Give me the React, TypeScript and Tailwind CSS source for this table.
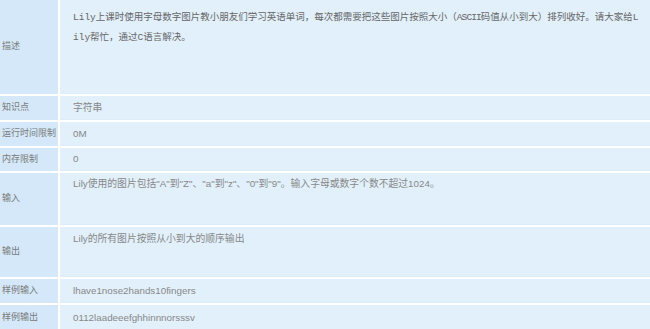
import React from 'react';

type Row = {
  label: string;
  height: string;
  value: React.ReactNode;
  top?: boolean;
};

const rows: Row[] = [
  {
    label: '描述',
    height: 'h-[94px]',
    top: true,
    value: (
      <div className="pt-[8px] leading-[20px] text-[9.5px] text-[#666] font-['Liberation_Mono','Noto_Sans_CJK_SC',monospace] whitespace-nowrap">
        <div>
          Lily上课时使用字母数字图片教小朋友们学习英语单词，每次都需要把这些图片按照大小（<span className="tracking-[-0.9px]">ASCII</span>码值从小到大）排列收好。请大家给L
        </div>
        <div>ily帮忙，通过C语言解决。</div>
      </div>
    ),
  },
  { label: '知识点', height: 'h-[24px]', value: '字符串' },
  { label: '运行时间限制', height: 'h-[24px]', value: '0M' },
  { label: '内存限制', height: 'h-[23px]', value: '0' },
  {
    label: '输入',
    height: 'h-[52px]',
    top: true,
    value: (
      <div className="pt-[3px]">
        Lily使用的图片包括"A"到"Z"、"a"到"z"、"0"到"9"。输入字母或数字个数不超过1024。
      </div>
    ),
  },
  {
    label: '输出',
    height: 'h-[50px]',
    top: true,
    value: <div className="pt-[4px]">Lily的所有图片按照从小到大的顺序输出</div>,
  },
  { label: '样例输入', height: 'h-[24px]', value: 'lhave1nose2hands10fingers' },
  { label: '样例输出', height: 'h-[26px]', value: '0112laadeeefghhinnnorsssv' },
];

const App: React.FC = () => {
  return (
    <div className="w-[650px] h-[329px] overflow-hidden bg-white font-['Liberation_Sans','Noto_Sans_CJK_SC',sans-serif] text-[9.8px] text-[#888]">
      <div className="grid grid-cols-[58px_1fr] gap-[2px]">
        {rows.map((row) => (
          <React.Fragment key={row.label}>
            <div className={`${row.height} bg-[#d4e8f9] text-[9px] text-[#7a7a7a] flex items-center pl-[2px] whitespace-nowrap`}>
              {row.label}
            </div>
            <div
              className={`${row.height} bg-[#e1f0fb] border-b border-[#dcedfa] pl-[13px] flex ${
                row.top ? 'items-start' : 'items-center'
              } leading-[16px]`}
            >
              {row.value}
            </div>
          </React.Fragment>
        ))}
      </div>
    </div>
  );
};

export default App;
